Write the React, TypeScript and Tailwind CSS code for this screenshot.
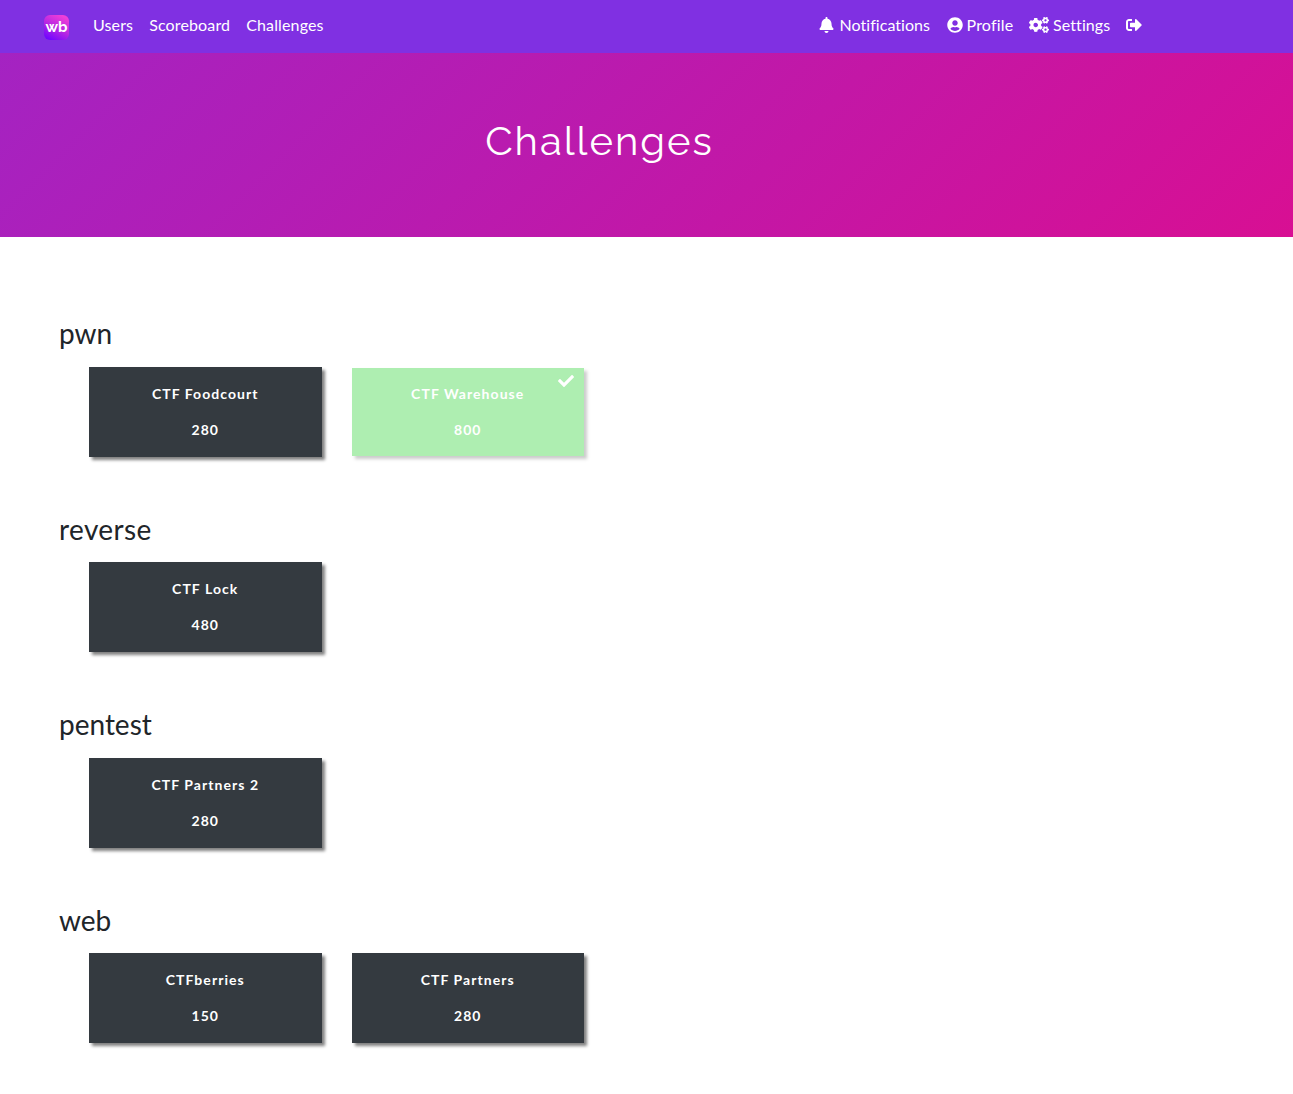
import { FaBell, FaUserCircle, FaCogs, FaSignOutAlt, FaCheck } from 'react-icons/fa';
import { clsx } from 'clsx';

interface Challenge {
  name: string;
  value: number;
  solved?: boolean;
}

const categories: { name: string; challenges: Challenge[] }[] = [
  {
    name: 'pwn',
    challenges: [
      { name: 'CTF Foodcourt', value: 280 },
      { name: 'CTF Warehouse', value: 800, solved: true },
    ],
  },
  { name: 'reverse', challenges: [{ name: 'CTF Lock', value: 480 }] },
  { name: 'pentest', challenges: [{ name: 'CTF Partners 2', value: 280 }] },
  {
    name: 'web',
    challenges: [
      { name: 'CTFberries', value: 150 },
      { name: 'CTF Partners', value: 280 },
    ],
  },
];

export default function App() {
  return (
    <div className="min-h-[1094px] overflow-hidden bg-white font-['Lato','Liberation_Sans',sans-serif] text-base text-[#212529]">
      <Navbar />

      <header className="h-[184px] bg-[linear-gradient(135deg,#a423c2,#d80f93)] pt-[64px] pr-[94px] text-center">
        <h1 className="font-['Raleway','Lato',sans-serif] text-[40px] leading-12 font-normal tracking-[2px] text-white">
          Challenges
        </h1>
      </header>

      <main className="pt-20 pl-[59px]">
        {categories.map((category) => (
          <section key={category.name} className="h-[195.5px]">
            <h3
              className={clsx(
                'text-[28px] leading-[33.6px]',
                category.name === 'reverse' && 'tracking-[0.4px]',
              )}
            >
              {category.name}
            </h3>
            <div className="mt-4 ml-[30px] flex gap-[30px]">
              {category.challenges.map((challenge) => (
                <ChallengeButton key={challenge.name} challenge={challenge} />
              ))}
            </div>
          </section>
        ))}
      </main>
    </div>
  );
}

function Navbar() {
  return (
    <nav className="flex h-[53px] items-start bg-[#8030e2] pt-[13px] pl-11 leading-6 text-white">
      <Logo />
      <div className="ml-6 flex gap-4 tracking-[0.14px]">
        <a>Users</a>
        <a>Scoreboard</a>
        <a>Challenges</a>
      </div>
      <div className="mr-[151px] ml-auto flex gap-4">
        <a className="flex items-center">
          <FaBell className="mr-1.5 h-4 w-[15px]" />
          <span className="w-[91px] tracking-[0.05px] [font-variant-ligatures:common-ligatures]">Notifications</span>
        </a>
        <a className="flex items-center">
          <FaUserCircle className="mr-1 size-4" />
          <span className="w-[46.5px] tracking-[0.2px]">Profile</span>
        </a>
        <a className="flex items-center">
          <FaCogs className="mr-1 h-4 w-5" />
          <span className="w-[57px] tracking-[0.1px]">Settings</span>
        </a>
        <a className="flex items-center">
          <FaSignOutAlt className="size-4" />
        </a>
      </div>
    </nav>
  );
}

function Logo() {
  return (
    <svg className="mt-0.5" width="25" height="25" viewBox="0 0 25 25">
      <defs>
        <linearGradient id="logo" x1="19" y1="1" x2="6" y2="25" gradientUnits="userSpaceOnUse">
          <stop stopColor="#f03fd8" />
          <stop offset="0.5" stopColor="#b827e2" />
          <stop offset="1" stopColor="#7006ff" />
        </linearGradient>
      </defs>
      <rect width="25" height="25" rx="6" fill="url(#logo)" />
      <text
        x="12.5"
        y="16.8"
        textAnchor="middle"
        textLength="22"
        lengthAdjust="spacingAndGlyphs"
        className="fill-white font-['Raleway','Lato',sans-serif] text-[15px] font-bold"
      >
        wb
      </text>
    </svg>
  );
}

function ChallengeButton({ challenge }: { challenge: Challenge }) {
  return (
    <button
      className={clsx(
        'relative w-[232.5px] text-center text-sm leading-5 font-bold tracking-[1.06px] text-white shadow-[3px_3px_3px_gray]',
        challenge.solved ? 'mt-px h-[88px] bg-[#37d63e] opacity-40' : 'h-[90px] bg-[#343a40]',
      )}
    >
      {challenge.solved && <FaCheck className="absolute top-[5px] right-2.5 size-4" />}
      <p className="mb-4">{challenge.name}</p>
      <p>{challenge.value}</p>
    </button>
  );
}
